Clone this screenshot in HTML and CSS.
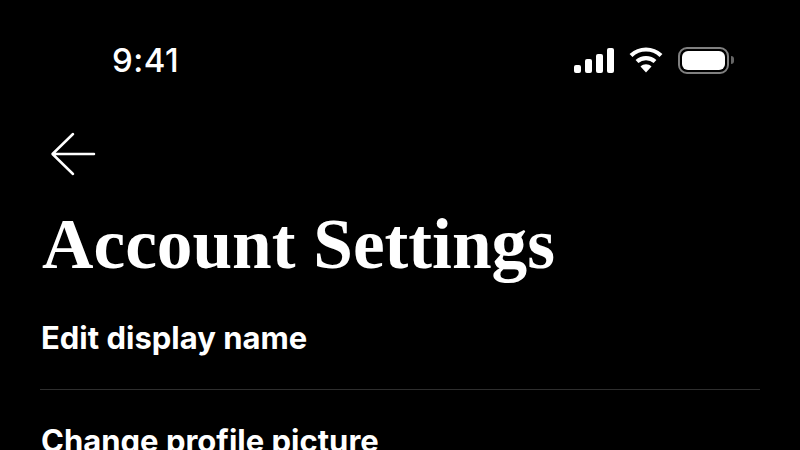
FILE: index.html
```html
<!DOCTYPE html>
<html lang="en">
<head>
    <meta charset="UTF-8">
    <meta name="viewport" content="width=device-width, initial-scale=1.0">
    <title>Account Settings</title>
    <link rel="stylesheet" href="styles.css">
</head>
<body>
    <div class="screen">
        <div class="status-bar">
            <div class="time">9:41</div>
            <div class="status-icons">
                <svg class="signal" width="40" height="25" viewBox="0 0 40 25">
                    <rect x="0" y="17" width="7" height="8" rx="2" fill="#fff"/>
                    <rect x="11" y="11" width="7" height="14" rx="2" fill="#fff"/>
                    <rect x="22" y="6" width="7" height="19" rx="2" fill="#fff"/>
                    <rect x="33" y="0" width="7" height="25" rx="2" fill="#fff"/>
                </svg>
                <svg class="wifi" width="34" height="26" viewBox="0 0 34 26">
                    <path d="M2 8.5C10.5 0.5 23.5 0.5 32 8.5" fill="none" stroke="#fff" stroke-width="4.2"/>
                    <path d="M8 14.5C13 10 21 10 26 14.5" fill="none" stroke="#fff" stroke-width="4.2"/>
                    <path d="M11.5 19.5C14.5 16.6 19.5 16.6 22.5 19.5L17 25.5Z" fill="#fff"/>
                </svg>
                <div class="battery">
                    <div class="battery-body"><div class="battery-fill"></div></div>
                    <div class="battery-cap"></div>
                </div>
            </div>
        </div>
        <div class="back">
            <svg width="46" height="46" viewBox="0 0 46 46">
                <path d="M44 23H3M23 3L2.5 23L23 43" fill="none" stroke="#fff" stroke-width="2.5" stroke-linecap="round" stroke-linejoin="round"/>
            </svg>
        </div>
        <h1 class="title">Account Settings</h1>
        <div class="settings-list">
            <div class="settings-item">Edit display name</div>
            <div class="settings-item">Change profile picture</div>
        </div>
    </div>
</body>
</html>
```

FILE: styles.css
```css
* {
    margin: 0;
    padding: 0;
    box-sizing: border-box;
}
html, body {
    height: 100%;
    overflow: hidden;
}
body {
    background: #000;
    color: #fff;
    font-family: Inter, "Liberation Sans", sans-serif;
}
.screen {
    width: 800px;
    height: 450px;
    padding: 0 40px;
    overflow: hidden;
}
/* Status bar */
.status-bar {
    display: flex;
    justify-content: space-between;
    align-items: center;
    height: 40px;
    margin-top: 40px;
    padding: 0 26px 0 72px;
}
.time {
    font-size: 33px;
    font-weight: 500;
    letter-spacing: 0.5px;
}
.status-icons {
    display: flex;
    align-items: center;
    gap: 15px;
}
.battery {
    display: flex;
    align-items: center;
    gap: 2px;
}
.battery-body {
    width: 51px;
    height: 27px;
    padding: 2px;
    border: 2px solid #808080;
    border-radius: 9px;
}
.battery-fill {
    height: 100%;
    background: #fff;
    border-radius: 6px;
}
.battery-cap {
    width: 3px;
    height: 8px;
    background: #666;
    border-radius: 0 3px 3px 0;
}
/* Header */
.back {
    display: flex;
    margin-top: 51px;
    padding-left: 10px;
}
.title {
    font-family: "Liberation Serif", serif;
    font-size: 71.3px;
    font-weight: 700;
    line-height: 80px;
    margin-top: 27px;
    margin-left: 2px;
}
/* List */
.settings-list {
    margin-top: 36px;
}
.settings-item {
    font-size: 31px;
    font-weight: 700;
    line-height: 36px;
    padding: 0 0 33px 1px;
    margin-bottom: 33px;
    border-bottom: 1px solid #2e2e2e;
}
```
